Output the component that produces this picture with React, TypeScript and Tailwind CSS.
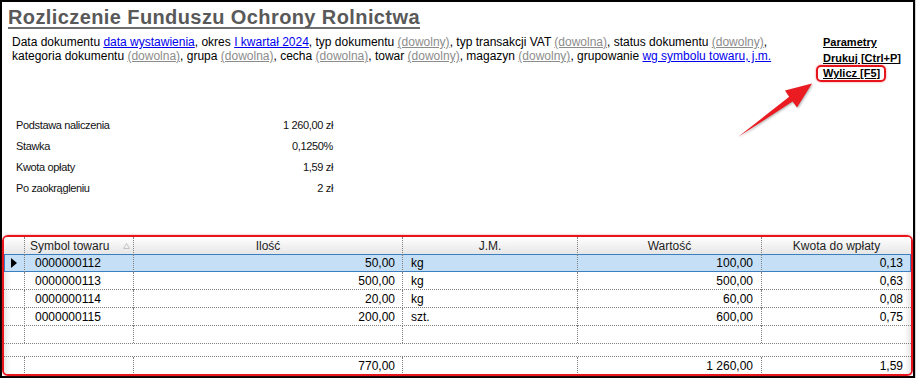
import React from "react"

type Row = { sym: string; qty: string; jm: string; val: string; fee: string }

const rows: Row[] = [
  { sym: "0000000112", qty: "50,00", jm: "kg", val: "100,00", fee: "0,13" },
  { sym: "0000000113", qty: "500,00", jm: "kg", val: "500,00", fee: "0,63" },
  { sym: "0000000114", qty: "20,00", jm: "kg", val: "60,00", fee: "0,08" },
  { sym: "0000000115", qty: "200,00", jm: "szt.", val: "600,00", fee: "0,75" },
]

const summary = [
  ["Podstawa naliczenia", "1 260,00 zł"],
  ["Stawka", "0,1250%"],
  ["Kwota opłaty", "1,59 zł"],
  ["Po zaokrągleniu", "2 zł"],
]

const cols = "grid grid-cols-[21px_109px_269px_175px_184px_149px]"
const sep = "border-r border-dotted border-[#808080]"

function A({ children }: { children: React.ReactNode }) {
  return <span className="text-[#0000ee] underline">{children}</span>
}

function G({ children }: { children: React.ReactNode }) {
  return <span className="text-[#8c8c8c] underline">{children}</span>
}

function DataRow({ row, selected }: { row?: Row; selected?: boolean }) {
  return (
    <div
      className={`${cols} h-[18px] ${
        selected
          ? "bg-[#c5dff6] shadow-[inset_0_0_0_1px_#3c7fc0]"
          : "border-b border-dotted border-[#808080]"
      }`}
    >
      <div className={`${sep} flex items-center pl-[7px]`}>
        {selected && (
          <svg width="6" height="10" viewBox="0 0 6 10">
            <polygon points="0,0 6,5 0,10" fill="#000" />
          </svg>
        )}
      </div>
      <div className={`${sep} flex items-center pl-[10px]`}>{row?.sym}</div>
      <div className={`${sep} flex items-center justify-end pr-[7px]`}>{row?.qty}</div>
      <div className={`${sep} flex items-center pl-[8px]`}>{row?.jm}</div>
      <div className={`${sep} flex items-center justify-end pr-[8px]`}>{row?.val}</div>
      <div className="flex items-center justify-end pr-[8px]">{row?.fee}</div>
    </div>
  )
}

export default function App() {
  return (
    <div className="w-[916px] h-[378px] bg-[#d4d4d4] font-['Liberation_Sans',Arial,sans-serif] text-black">
      <div className="relative w-[915px] h-[378px] bg-white border-2 border-black flex flex-col">
        {/* title */}
        <div className="pl-[6px] pt-[5px]">
          <span className="inline-block text-[20px] leading-[20px] tracking-[0.4px] font-bold text-[#595959] border-b-2 border-[#6e6e6e]">
            Rozliczenie Funduszu Ochrony Rolnictwa
          </span>
        </div>

        {/* filters + actions */}
        <div className="mt-[4px] h-[81px] flex items-start">
          <div className="flex-1 pl-[10px] text-[12px] leading-[14px] whitespace-nowrap">
            <div>
              Data dokumentu <A>data wystawienia</A>, okres <A>I kwartał 2024</A>, typ dokumentu{" "}
              <G>(dowolny)</G>, typ transakcji VAT <G>(dowolna)</G>, status dokumentu <G>(dowolny)</G>,
            </div>
            <div>
              kategoria dokumentu <G>(dowolna)</G>, grupa <G>(dowolna)</G>, cecha <G>(dowolna)</G>, towar{" "}
              <G>(dowolny)</G>, magazyn <G>(dowolny)</G>, grupowanie <A>wg symbolu towaru, j.m.</A>
            </div>
          </div>
          <div className="w-[90px] flex flex-col text-[11px] leading-[15.5px] font-bold underline whitespace-nowrap">
            <span>Parametry</span>
            <span>Drukuj [Ctrl+P]</span>
            <span>Wylicz [F5]</span>
          </div>
        </div>

        {/* summary */}
        <div className="w-[331px] pl-[14px] text-[11px] tracking-[-0.35px] text-[#111]">
          {summary.map(([label, value]) => (
            <div key={label} className="h-[21px] leading-[21px] flex justify-between">
              <span>{label}</span>
              <span>{value}</span>
            </div>
          ))}
        </div>

        {/* grid */}
        <div className="mt-[36px] h-[142px] border-2 border-[#e8141b] rounded-[6px] shadow-[0_0_2px_rgba(232,20,27,0.6)] overflow-hidden">
          <div className="h-full bg-white text-[12px] shadow-[inset_6px_0_6px_-4px_rgba(0,0,0,0.14),inset_-6px_0_6px_-4px_rgba(0,0,0,0.14)]">
            <div className={`${cols} h-[17px] bg-linear-to-b from-white to-[#e6e6e6] text-[#1e1e1e]`}>
              <div className={sep} />
              <div className={`${sep} flex items-center pl-[5px] pr-[3px]`}>
                <span>Symbol towaru</span>
                <svg className="ml-auto" width="7" height="6" viewBox="0 0 7 6">
                  <polygon points="3.5,0.5 6.5,5.5 0.5,5.5" fill="none" stroke="#c4c4c4" />
                </svg>
              </div>
              <div className={`${sep} flex items-center justify-center`}>Ilość</div>
              <div className={`${sep} flex items-center justify-center`}>J.M.</div>
              <div className={`${sep} flex items-center justify-center`}>Wartość</div>
              <div className="flex items-center justify-center">Kwota do wpłaty</div>
            </div>

            {rows.map((r, i) => (
              <DataRow key={r.sym} row={r} selected={i === 0} />
            ))}
            <DataRow />

            <div className="h-[12px]" />

            <div className={`${cols} h-[19px] border-y border-dotted border-[#808080]`}>
              <div className={sep} />
              <div className={sep} />
              <div className={`${sep} flex items-center justify-end pr-[7px]`}>770,00</div>
              <div className={sep} />
              <div className={`${sep} flex items-center justify-end pr-[8px]`}>1 260,00</div>
              <div className="flex items-center justify-end pr-[8px]">1,59</div>
            </div>
          </div>
        </div>

        {/* annotations */}
        <div className="absolute left-[814px] top-[63px] w-[70px] h-[17px] border-2 border-[#e8141b] rounded-[5px] shadow-[0_0_2px_rgba(232,20,27,0.6)]" />
        <svg
          className="absolute left-[-2px] top-[-2px] pointer-events-none drop-shadow-[1px_1px_1px_rgba(0,0,0,0.3)]"
          width="916"
          height="378"
          viewBox="0 0 916 378"
        >
          <polygon
            points="738,137 789.2,96.7 785,90.5 812,83.5 797,107.5 792.6,101.5"
            fill="#ea1c22"
          />
        </svg>
      </div>
    </div>
  )
}
